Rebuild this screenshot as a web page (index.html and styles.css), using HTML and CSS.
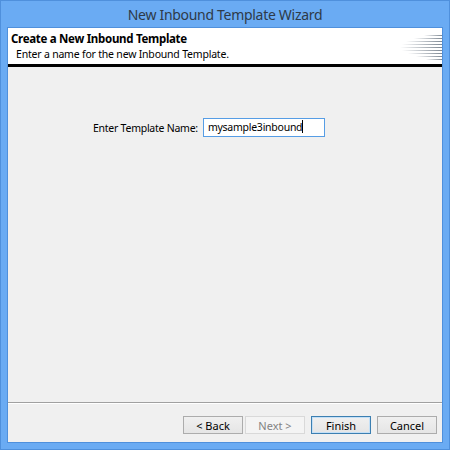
FILE: index.html
```html
<!DOCTYPE html>
<html lang="en">
<head>
  <meta charset="UTF-8" />
  <title>New Inbound Template Wizard</title>
  <link rel="stylesheet" href="styles.css">
</head>
<body>
  <div class="window">
    <div class="titlebar">New Inbound Template Wizard</div>
    <div class="client">
      <div class="banner">
        <div class="banner-text">
          <div class="banner-title">Create a New Inbound Template</div>
          <div class="banner-sub">Enter a name for the new Inbound Template.</div>
        </div>
        <svg class="banner-art" width="44" height="28" viewBox="0 0 44 28">
          <defs>
            <linearGradient id="fade" x1="0" x2="1" y1="0" y2="0">
              <stop offset="0" stop-color="#ffffff" />
              <stop offset="1" stop-color="#7d8792" />
            </linearGradient>
          </defs>
          <rect x="26" y="1" width="18" height="1" fill="url(#fade)" />
          <rect x="16" y="4" width="28" height="1" fill="url(#fade)" />
          <rect x="8" y="7" width="36" height="1" fill="url(#fade)" />
          <rect x="4" y="10" width="40" height="1" fill="url(#fade)" />
          <rect x="2" y="13" width="42" height="1" fill="url(#fade)" />
          <rect x="4" y="16" width="40" height="1" fill="url(#fade)" />
          <rect x="10" y="19" width="34" height="1" fill="url(#fade)" />
          <rect x="18" y="22" width="26" height="1" fill="url(#fade)" />
          <rect x="28" y="25" width="16" height="1" fill="url(#fade)" />
        </svg>
      </div>
      <div class="banner-rule"></div>
      <div class="content">
        <div class="field-row">
          <label for="templateName">Enter Template Name:</label>
          <div class="textbox" id="templateName">mysample3inbound<span class="caret"></span></div>
        </div>
      </div>
      <div class="button-bar">
        <button class="btn">&lt; Back</button>
        <button class="btn" disabled>Next &gt;</button>
        <button class="btn btn-default">Finish</button>
        <button class="btn">Cancel</button>
      </div>
    </div>
  </div>
</body>
</html>
```

FILE: styles.css
```css
body {
  margin: 0;
  font-family: "Noto Sans", "Open Sans", sans-serif;
}
.window {
  width: 450px;
  height: 450px;
  box-sizing: border-box;
  background: #6aabf3;
  border: 1px solid #4f90dc;
  display: flex;
  flex-direction: column;
}
.titlebar {
  height: 26px;
  display: flex;
  align-items: center;
  justify-content: center;
  font-size: 14px;
  letter-spacing: -0.3px;
  color: #2e3a48;
}
.client {
  flex: 1;
  margin: 0 6px 6px 6px;
  background: #f0f0f0;
  border: 1px solid #4f90dc;
  display: flex;
  flex-direction: column;
}
.banner {
  height: 36px;
  background: #fff;
  display: flex;
  justify-content: space-between;
  align-items: center;
}
.banner-text {
  padding-left: 3px;
}
.banner-title {
  font-weight: bold;
  font-size: 11.5px;
  letter-spacing: -0.3px;
  color: #000;
  line-height: 15px;
}
.banner-sub {
  font-size: 10.5px;
  letter-spacing: -0.2px;
  color: #000;
  padding-left: 5px;
  line-height: 16px;
}
.banner-art {
  display: block;
  margin-top: 4px;
}
.banner-rule {
  height: 3px;
  background: #000;
}
.content {
  flex: 1;
  display: flex;
  flex-direction: column;
  align-items: flex-start;
  padding: 51px 0 0 85px;
  border-bottom: 1px solid #a0a0a0;
  box-shadow: 0 1px 0 #fff;
}
.field-row {
  display: flex;
  align-items: center;
  gap: 5px;
}
.field-row label {
  font-size: 10.5px;
  letter-spacing: -0.25px;
  color: #000;
}
.textbox {
  width: 116px;
  height: 17px;
  border: 1px solid #569de5;
  background: #fff;
  font-size: 10.5px;
  letter-spacing: -0.25px;
  line-height: 17px;
  padding-left: 4px;
  color: #000;
}
.caret {
  display: inline-block;
  width: 1px;
  height: 13px;
  background: #000;
  vertical-align: -2px;
}
.button-bar {
  height: 38px;
  display: flex;
  justify-content: flex-end;
  align-items: flex-end;
  padding: 0 5px 8px 0;
  box-sizing: border-box;
  margin-top: 1px;
}
.btn {
  width: 60px;
  height: 18px;
  margin-left: 6px;
  padding: 0;
  font-family: inherit;
  font-size: 11px;
  color: #000;
  background: linear-gradient(#f0f0f0, #e5e5e5);
  border: 1px solid #acacac;
}
.btn:first-child {
  margin-left: 0;
}
.btn:nth-child(2) {
  margin-left: 2px;
}
.btn:disabled {
  color: #838383;
  background: #f4f4f4;
  border-color: #d9d9d9;
}
.btn-default {
  border-color: #3c7fb1;
  box-shadow: inset 0 0 0 1px #c4e0f7;
}
```
